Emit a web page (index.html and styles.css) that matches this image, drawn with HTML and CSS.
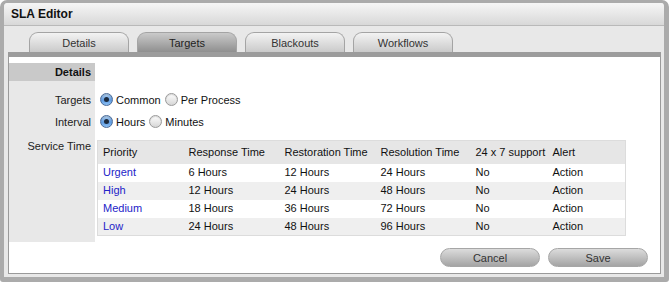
FILE: index.html
```html
<!DOCTYPE html>
<html lang="en">
<head>
    <meta charset="UTF-8">
    <title>SLA Editor</title>
    <link rel="stylesheet" href="styles.css">
</head>
<body>
    <div class="window">
        <div class="title-bar">SLA Editor</div>

        <div class="tabs">
            <div class="tab">Details</div>
            <div class="tab active">Targets</div>
            <div class="tab">Blackouts</div>
            <div class="tab">Workflows</div>
        </div>

        <div class="panel">
            <div class="form">
                <div class="label head">Details</div>
                <div class="value head"></div>

                <div class="label row-targets">Targets</div>
                <div class="value row-targets">
                    <span class="radio checked"></span><span class="opt">Common</span>
                    <span class="radio"></span><span class="opt">Per Process</span>
                </div>

                <div class="label row-interval">Interval</div>
                <div class="value row-interval">
                    <span class="radio checked"></span><span class="opt">Hours</span>
                    <span class="radio"></span><span class="opt">Minutes</span>
                </div>

                <div class="label row-service">Service Time</div>
                <div class="value row-service">
                    <table class="targets">
                        <colgroup>
                            <col style="width: 86px">
                            <col style="width: 96px">
                            <col style="width: 96px">
                            <col style="width: 95px">
                            <col style="width: 77px">
                            <col>
                        </colgroup>
                        <thead>
                            <tr>
                                <th>Priority</th>
                                <th>Response Time</th>
                                <th>Restoration Time</th>
                                <th>Resolution Time</th>
                                <th>24 x 7 support</th>
                                <th>Alert</th>
                            </tr>
                        </thead>
                        <tbody>
                            <tr>
                                <td><a href="#">Urgent</a></td>
                                <td>6 Hours</td>
                                <td>12 Hours</td>
                                <td>24 Hours</td>
                                <td>No</td>
                                <td>Action</td>
                            </tr>
                            <tr>
                                <td><a href="#">High</a></td>
                                <td>12 Hours</td>
                                <td>24 Hours</td>
                                <td>48 Hours</td>
                                <td>No</td>
                                <td>Action</td>
                            </tr>
                            <tr>
                                <td><a href="#">Medium</a></td>
                                <td>18 Hours</td>
                                <td>36 Hours</td>
                                <td>72 Hours</td>
                                <td>No</td>
                                <td>Action</td>
                            </tr>
                            <tr>
                                <td><a href="#">Low</a></td>
                                <td>24 Hours</td>
                                <td>48 Hours</td>
                                <td>96 Hours</td>
                                <td>No</td>
                                <td>Action</td>
                            </tr>
                        </tbody>
                    </table>
                </div>
            </div>

            <div class="buttons">
                <button class="btn">Cancel</button>
                <button class="btn">Save</button>
            </div>
        </div>
    </div>
</body>
</html>
```

FILE: styles.css
```css
* {
    box-sizing: border-box;
}
body {
    margin: 0;
    font-family: "Liberation Sans", Arial, sans-serif;
    font-size: 11px;
    color: #222;
    background-color: #fff;
}
.window {
    width: 669px;
    height: 282px;
    border-style: solid;
    border-color: #ababab;
    border-width: 3px 5px 5px 4px;
    border-radius: 7px 7px 3px 3px;
    background-color: #e8e8e8;
    padding: 0 3px 3px 4px;
}
.title-bar {
    height: 23px;
    margin: 0 -3px 0 -4px;
    padding-left: 7px;
    line-height: 22px;
    font-size: 12px;
    font-weight: bold;
    color: #111;
    background: linear-gradient(#f6f6f6, #d8d8d8);
    border-bottom: 1px solid #b9b9b9;
    border-radius: 4px 4px 0 0;
}
.tabs {
    display: flex;
    gap: 8px;
    padding: 6px 0 0 21px;
    height: 26px;
}
.tab {
    width: 100px;
    height: 20px;
    line-height: 20px;
    text-align: center;
    color: #333;
    border: 1px solid #a4a4a4;
    border-bottom: none;
    border-radius: 9px 9px 0 0;
    background: linear-gradient(#f3f3f3, #cacaca);
}
.tab.active {
    background: linear-gradient(#cacaca, #8f8f8f);
    color: #222;
}
.panel {
    height: 222px;
    background-color: #fff;
    border: 1px solid #9a9a9a;
    border-top: 5px solid #9c9c9c;
    padding-top: 6px;
}
.form {
    display: grid;
    grid-template-columns: 86px 1fr;
}
.label {
    background-color: #e8e8e8;
    text-align: right;
    padding-right: 4px;
    color: #222;
}
.label.head {
    background-color: #c9c9c9;
    font-weight: bold;
    height: 18px;
    line-height: 18px;
    color: #111;
}
.row-targets {
    padding-top: 8px;
    height: 30px;
    line-height: 22px;
}
.row-interval {
    height: 22px;
    line-height: 22px;
}
.row-service {
    padding-top: 7px;
    padding-bottom: 6px;
    line-height: 13px;
}
.value {
    padding-left: 5px;
    display: flex;
    align-items: center;
}
.value.row-targets,
.value.row-interval {
    align-items: flex-start;
}
.value.row-service {
    padding-left: 2px;
}
.radio {
    display: inline-block;
    width: 13px;
    height: 13px;
    margin-top: 4px;
    margin-right: 3px;
    border-radius: 50%;
    border: 1px solid #9a9a9a;
    background: linear-gradient(#fefefe, #d6d6d6);
    box-shadow: inset 0 1px 1px rgba(0,0,0,0.15);
    position: relative;
}
.radio.checked {
    border-color: #4a6a98;
    background: linear-gradient(#b8d4f0, #5d9ae0 55%, #8cc0f4);
}
.radio.checked::after {
    content: "";
    position: absolute;
    left: 3px;
    top: 3px;
    width: 5px;
    height: 5px;
    border-radius: 50%;
    background-color: #1c2a3c;
}
.opt {
    margin-right: 4px;
    color: #111;
}
.targets {
    width: 529px;
    table-layout: fixed;
    border-collapse: collapse;
    border: 1px solid #dcdcdc;
    color: #111;
}
.targets th {
    background-color: #e6e6e6;
    font-weight: normal;
    text-align: left;
    height: 23px;
    padding: 0 0 0 5px;
    white-space: nowrap;
}
.targets td {
    height: 18px;
    padding: 0 0 0 5px;
    white-space: nowrap;
}
.targets tbody tr:nth-child(even) td {
    background-color: #efefef;
}
.targets a {
    color: #2323c8;
    text-decoration: none;
}
.buttons {
    display: flex;
    justify-content: flex-end;
    gap: 8px;
    padding: 6px 12px 0 0;
}
.btn {
    width: 100px;
    height: 19px;
    font-family: "Liberation Sans", Arial, sans-serif;
    font-size: 11px;
    color: #333;
    border: 1px solid #a6a6a6;
    border-radius: 10px;
    background: linear-gradient(#dcdcdc, #a4a4a4);
    padding: 0;
}
```
